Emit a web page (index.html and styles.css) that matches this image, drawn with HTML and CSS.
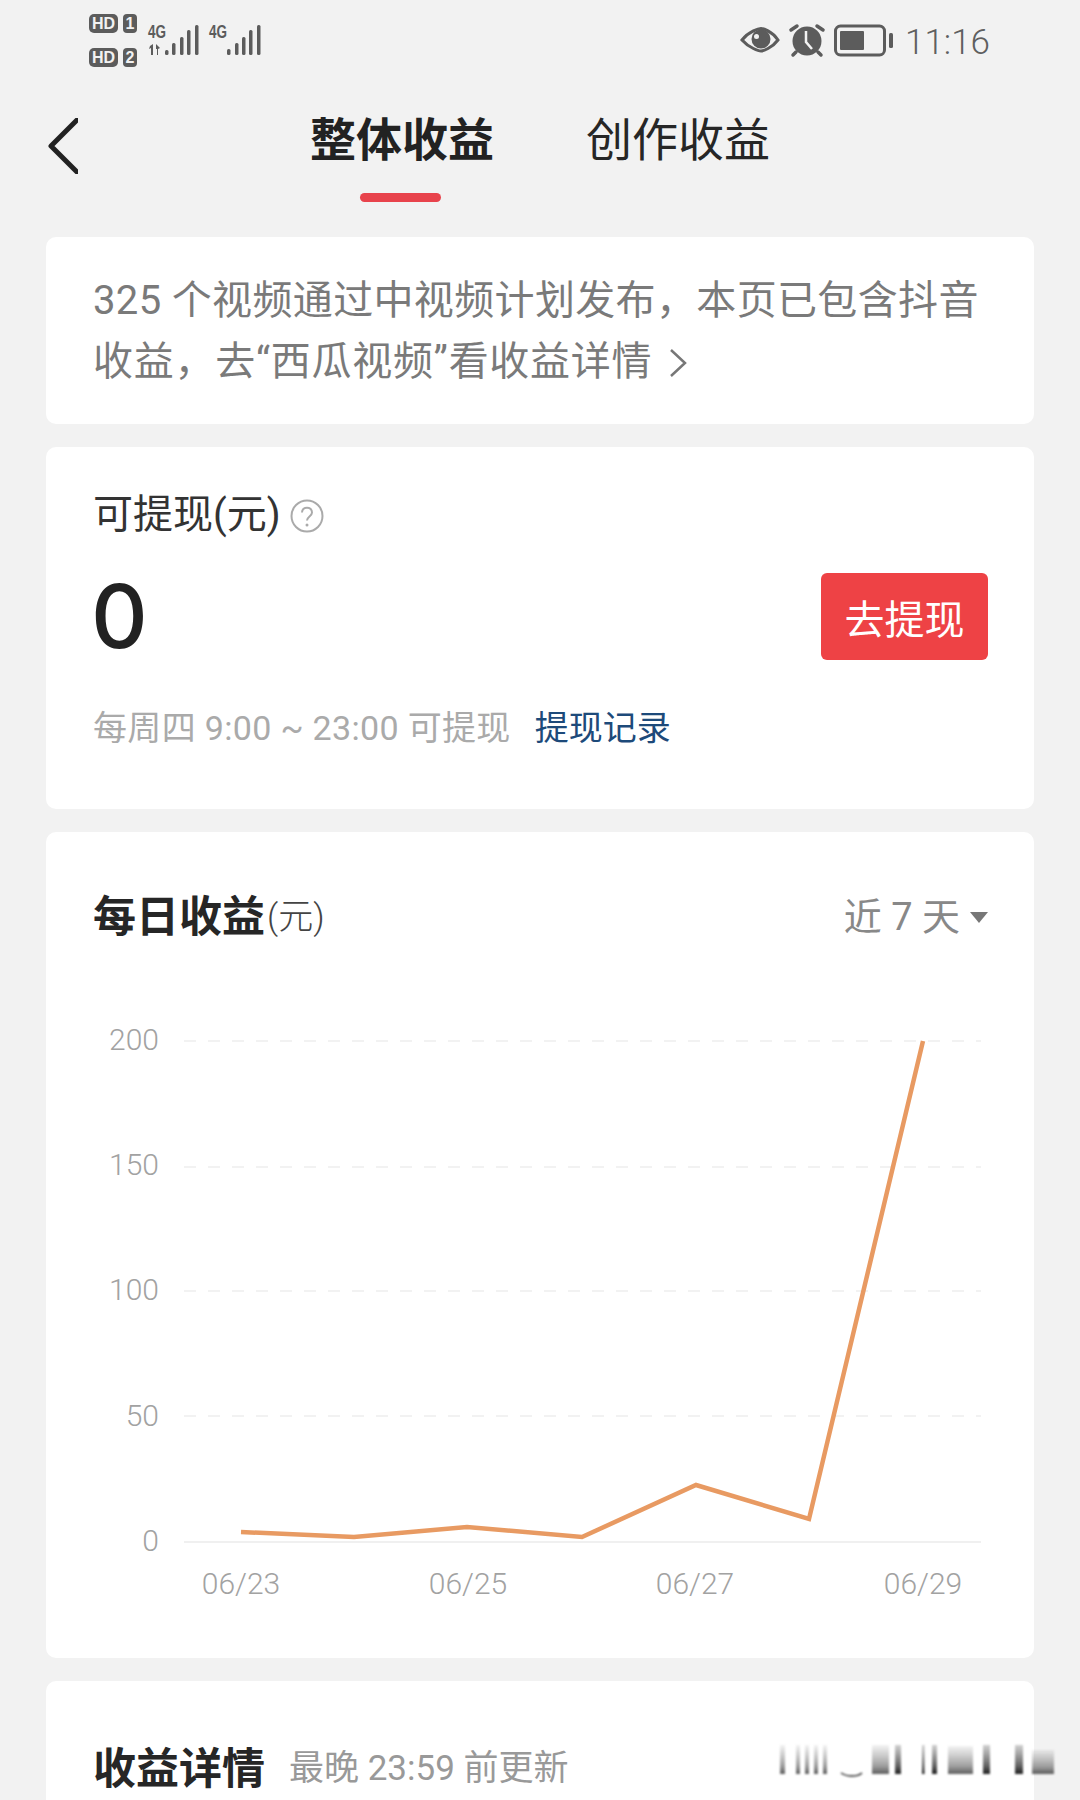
FILE: index.html
```html
<!DOCTYPE html>
<html lang="zh-CN">
<head>
<meta charset="utf-8">
<title>整体收益</title>
<link rel="stylesheet" href="styles.css">
</head>
<body>
<div class="page">
  <div class="statusbar">
    <svg class="status-left" width="190" height="80" viewBox="80 0 190 80">
      <rect class="ic" x="89" y="14" width="29" height="19" rx="5"/>
      <text class="badge" x="103.5" y="29" text-anchor="middle">HD</text>
      <rect class="ic" x="123" y="14" width="14" height="19" rx="4"/>
      <text class="badge" x="130" y="29" text-anchor="middle">1</text>
      <rect class="ic" x="89" y="48" width="29" height="19" rx="5"/>
      <text class="badge" x="103.5" y="63" text-anchor="middle">HD</text>
      <rect class="ic" x="123" y="48" width="14" height="19" rx="4"/>
      <text class="badge" x="130" y="63" text-anchor="middle">2</text>
      <text class="net" x="148" y="38" textLength="18" lengthAdjust="spacingAndGlyphs">4G</text>
      <path class="ic" d="M150 46l3-2v11h-2v-7l-2 1zM156 44l4 4-2 1v6l-1 0v-6l-1 0z"/>
      <rect class="ic" x="165" y="50" width="3.5" height="5" rx="1.5"/>
      <rect class="ic" x="172" y="43" width="3.5" height="12" rx="1.5"/>
      <rect class="ic" x="180" y="37" width="3.5" height="18" rx="1.5"/>
      <rect class="ic" x="187" y="30" width="3.5" height="25" rx="1.5"/>
      <rect class="ic" x="195" y="25" width="3.5" height="30" rx="1.5"/>
      <text class="net" x="209" y="38" textLength="18" lengthAdjust="spacingAndGlyphs">4G</text>
      <rect class="ic" x="227" y="49" width="3.5" height="6" rx="1.5"/>
      <rect class="ic" x="235" y="43" width="3.5" height="12" rx="1.5"/>
      <rect class="ic" x="242" y="37" width="3.5" height="18" rx="1.5"/>
      <rect class="ic" x="249" y="30" width="3.5" height="25" rx="1.5"/>
      <rect class="ic" x="257" y="25" width="3.5" height="30" rx="1.5"/>
    </svg>
    <div class="status-right">
      <svg width="160" height="40" viewBox="738 20 160 40">
        <path class="ic-line" d="M741 40C748 31 758 28.500 760 28.500C762 28.500 771 31 777 40C771 48 762 51 760 51C758 51 748 48 741 40Z"/>
        <circle class="ic" cx="760" cy="39" r="9.500"/>
        <circle class="hole" cx="755.500" cy="36.500" r="2.500"/>
        <circle class="ic" cx="806" cy="41" r="14.500"/>
        <path class="hand" d="M805 31v11l6 7"/>
        <path class="bell" d="M790 30l6-4M822 30l-6-4M795 52l-3 3M817 52l3 3"/>
        <rect class="ic-line" x="834.500" y="26" width="49" height="29" rx="5"/>
        <rect class="ic" x="839" y="31" width="24" height="19" rx="1"/>
        <rect class="ic" x="888" y="33" width="4" height="15" rx="1.500"/>
      </svg>
      <span class="time">11:16</span>
    </div>
  </div>

  <div class="nav">
    <svg class="back" width="30" height="56" viewBox="0 0 30 56">
      <path d="M29 2L3 28L29 54"/>
    </svg>
    <div class="tabs">
      <div class="tab tab-active">整体收益<span class="tab-bar"></span></div>
      <div class="tab">创作收益</div>
    </div>
  </div>

  <section class="card notice">
    <p class="notice-text">325 个视频通过中视频计划发布，本页已包含抖音<br><span class="notice-second">收益，去“西瓜视频”看收益详情 <svg class="notice-arrow" width="18" height="30" viewBox="0 0 18 30"><path d="M2 2L16 15L2 28"/></svg></span></p>
  </section>

  <section class="card withdraw">
    <div class="withdraw-label">
      <span>可提现(元)</span>
      <svg class="help" width="34" height="34" viewBox="0 0 34 34">
        <circle cx="17" cy="17" r="15.500"/>
        <path d="M12 13.500C12 7 22 7 22 13.500C22 17.500 17 17.500 17 21.500"/>
        <circle class="help-dot" cx="17" cy="26" r="1.500"/>
      </svg>
    </div>
    <div class="withdraw-row">
      <span class="amount">0</span>
      <button class="cta">去提现</button>
    </div>
    <div class="withdraw-foot">
      <span class="foot-note">每周四 9:00 ~ 23:00 可提现</span>
      <span class="foot-link">提现记录</span>
    </div>
  </section>

  <section class="card daily">
    <div class="card-head">
      <h2 class="card-title daily-title">每日收益<small class="unit">(元)</small></h2>
      <div class="range">近 7 天<span class="caret"></span></div>
    </div>
    <svg class="chart" width="988" height="711" viewBox="46 947 988 711">
      <g class="grid">
        <line x1="184" y1="1041" x2="981" y2="1041"/>
        <line x1="184" y1="1167" x2="981" y2="1167"/>
        <line x1="184" y1="1291" x2="981" y2="1291"/>
        <line x1="184" y1="1416" x2="981" y2="1416"/>
      </g>
      <line class="axis" x1="184" y1="1542" x2="981" y2="1542"/>
      <g class="ylabels">
        <text x="159" y="1050">200</text>
        <text x="159" y="1175">150</text>
        <text x="159" y="1300">100</text>
        <text x="159" y="1426">50</text>
        <text x="159" y="1551">0</text>
      </g>
      <g class="xlabels">
        <text x="241" y="1594">06/23</text>
        <text x="468" y="1594">06/25</text>
        <text x="695" y="1594">06/27</text>
        <text x="923" y="1594">06/29</text>
      </g>
      <polyline class="series" points="241,1532 354,1537 467,1527 582,1537 696,1485 809,1519 923,1041"/>
    </svg>
  </section>

  <section class="card details">
    <div class="details-head">
      <h2 class="card-title">收益详情</h2>
      <span class="details-sub">最晚 23:59 前更新</span>
    </div>
  </section>

  <svg class="smear" width="280" height="34" viewBox="777 1744 280 34">
    <defs>
      <linearGradient id="fade" x1="0" y1="0" x2="0" y2="1">
        <stop offset="0" stop-color="#666" stop-opacity="0.08"/>
        <stop offset="0.7" stop-color="#555" stop-opacity="0.55"/>
        <stop offset="1" stop-color="#333" stop-opacity="0.8"/>
      </linearGradient>
      <linearGradient id="fadeDark" x1="0" y1="0" x2="0" y2="1">
        <stop offset="0" stop-color="#444" stop-opacity="0.25"/>
        <stop offset="0.7" stop-color="#333" stop-opacity="0.75"/>
        <stop offset="1" stop-color="#111" stop-opacity="0.95"/>
      </linearGradient>
    </defs>
    <g fill="url(#fade)">
      <rect x="780" y="1745" width="5" height="29"/>
      <rect x="796" y="1745" width="4" height="29"/>
      <rect x="805" y="1745" width="4" height="29"/>
      <rect x="814" y="1745" width="4" height="29"/>
      <rect x="823" y="1745" width="4" height="29"/>
      <rect x="872" y="1745" width="17" height="29"/>
      <rect x="948" y="1746" width="25" height="28"/>
      <rect x="1032" y="1750" width="22" height="24"/>
    </g>
    <g fill="url(#fadeDark)">
      <rect x="895" y="1745" width="6" height="29"/>
      <rect x="922" y="1745" width="2.500" height="29"/>
      <rect x="932" y="1745" width="5" height="29"/>
      <rect x="983" y="1745" width="7" height="29"/>
      <rect x="1015" y="1745" width="8" height="29"/>
    </g>
    <path class="smear-u" d="M841 1773C847 1777 857 1777 862 1773"/>
  </svg>
</div>
</body>
</html>
```

FILE: styles.css
```css
* {
  box-sizing: border-box;
}

html,
body {
  margin: 0;
  padding: 0;
}

body {
  background: #f2f2f2;
  font-family: Roboto, "Noto Sans CJK SC", sans-serif;
}

.page {
  position: relative;
  width: 1080px;
  height: 1800px;
  overflow: hidden;
  background: #f2f2f2;
}

/* status bar */
.statusbar {
  display: flex;
  justify-content: space-between;
  height: 84px;
  padding: 0 90px 0 80px;
}

.status-left {
  display: block;
}

.status-right {
  display: flex;
  align-items: flex-start;
  gap: 6px;
  padding-top: 20px;
}

.status-right svg {
  display: block;
}

.ic {
  fill: #5c5c5c;
}

.ic-line {
  fill: none;
  stroke: #5c5c5c;
  stroke-width: 3;
}

.hole {
  fill: #f2f2f2;
}

.hand {
  fill: none;
  stroke: #f2f2f2;
  stroke-width: 2.500;
}

.bell {
  fill: none;
  stroke: #5c5c5c;
  stroke-width: 3.500;
  stroke-linecap: round;
}

.badge {
  fill: #f2f2f2;
  font-family: "Liberation Sans", sans-serif;
  font-size: 16px;
  font-weight: 700;
}

.net {
  fill: #5c5c5c;
  font-family: "Liberation Sans", sans-serif;
  font-size: 19px;
  font-weight: 700;
}

.time {
  margin-top: 2px;
  color: #5f5f5f;
  font-size: 35px;
  font-weight: 300;
  line-height: 42px;
}

/* nav */
.nav {
  display: flex;
  align-items: flex-start;
  height: 153px;
  padding-left: 48px;
}

.back {
  display: block;
  margin-top: 34px;
  flex: none;
}

.back path {
  fill: none;
  stroke: #222;
  stroke-width: 5;
  stroke-linecap: round;
  stroke-linejoin: round;
}

.tabs {
  display: flex;
  gap: 92px;
  margin-left: 232px;
  padding-top: 28px;
}

.tab {
  display: flex;
  flex-direction: column;
  align-items: center;
  color: #262626;
  font-size: 46px;
  line-height: 56px;
}

.tab-active {
  font-weight: 700;
  color: #222;
}

.tab-bar {
  display: block;
  width: 81px;
  height: 9px;
  margin-top: 25px;
  margin-right: 4px;
  border-radius: 5px;
  background: #e8434c;
}

/* cards */
.card {
  margin: 0 46px 23px;
  border-radius: 10px;
  background: #fff;
}

.notice {
  height: 187px;
  padding: 33px 47px 0;
}

.notice-text {
  margin: 0;
  color: #7a7a7a;
  font-size: 40px;
  line-height: 61px;
  letter-spacing: 0.35px;
}

.notice-second {
  letter-spacing: 0.72px;
}

.notice-arrow {
  margin-left: 6px;
  vertical-align: -3px;
}

.notice-arrow path {
  fill: none;
  stroke: #777;
  stroke-width: 2.500;
}

.withdraw {
  height: 362px;
  padding: 43px 46px 0 47px;
}

.withdraw-label {
  display: flex;
  align-items: center;
  gap: 9px;
  color: #333;
  font-size: 40px;
  line-height: 50px;
}

.help {
  display: block;
  margin-top: 2px;
}

.help circle,
.help path {
  fill: none;
  stroke: #aaa;
  stroke-width: 2;
}

.help .help-dot {
  fill: #aaa;
  stroke: none;
}

.withdraw-row {
  display: flex;
  justify-content: space-between;
  align-items: center;
  margin-top: 33px;
}

.amount {
  margin-left: -2px;
  color: #222;
  font-family: Inter, Roboto, sans-serif;
  font-size: 88px;
  font-weight: 500;
  line-height: 87px;
}

.cta {
  width: 167px;
  height: 87px;
  padding: 0;
  border: 0;
  border-radius: 6px;
  background: #ee4245;
  color: #fff;
  font-family: inherit;
  font-size: 40px;
}

.withdraw-foot {
  display: flex;
  gap: 24px;
  margin-top: 46px;
  font-size: 34px;
  line-height: 44px;
}

.foot-note {
  color: #aaa;
  letter-spacing: 0.33px;
}

.foot-link {
  color: #1d4a7a;
}

.daily {
  height: 826px;
  padding-top: 55px;
}

.card-head {
  display: flex;
  justify-content: space-between;
  align-items: center;
  height: 60px;
  padding: 0 46px 0 47px;
}

.card-title {
  margin: 0;
  color: #262626;
  font-size: 43px;
  font-weight: 700;
  line-height: 60px;
}

.daily-title {
  margin-top: 4px;
}

.unit {
  position: relative;
  top: -3px;
  margin-left: 2px;
  color: #444;
  font-size: 35px;
  font-weight: 300;
}

.range {
  display: flex;
  align-items: center;
  gap: 10px;
  color: #888;
  font-size: 38px;
  line-height: 60px;
}

.caret {
  width: 0;
  height: 0;
  border-left: 9px solid transparent;
  border-right: 9px solid transparent;
  border-top: 11px solid #777;
}

.chart {
  display: block;
}

.grid line {
  stroke: #f2f2f2;
  stroke-width: 2;
  stroke-dasharray: 12 12;
}

.axis {
  stroke: #f0f0f0;
  stroke-width: 2;
}

.ylabels text {
  fill: #a2a2a2;
  font-size: 30px;
  font-weight: 300;
  text-anchor: end;
}

.xlabels text {
  fill: #a2a2a2;
  font-size: 30px;
  font-weight: 300;
  text-anchor: middle;
}

.series {
  fill: none;
  stroke: #e89a62;
  stroke-width: 4.500;
  stroke-linejoin: miter;
}

.details {
  height: 200px;
  padding: 58px 47px 0;
}

.details-head {
  display: flex;
  align-items: center;
  gap: 24px;
}

.details-sub {
  color: #999;
  font-size: 35px;
  line-height: 60px;
}

.smear {
  position: absolute;
  left: 777px;
  top: 1744px;
  filter: blur(0.8px);
}

.smear-u {
  fill: none;
  stroke: #222;
  stroke-width: 1.500;
}
```
